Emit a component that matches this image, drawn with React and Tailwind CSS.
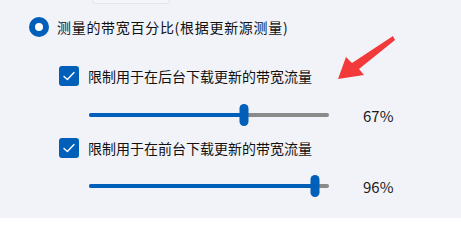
import React from 'react';

const font = { fontFamily: '"Segoe UI", "Noto Sans CJK SC", "Noto Sans", sans-serif' };

const CheckBox = () => (
    <div className="w-[20px] h-[20px] rounded-[3px] bg-[#005fb8] flex items-center justify-center shrink-0">
        <svg width="14" height="14" viewBox="0 0 14 14" fill="none">
            <path d="M2 7.4 L5.4 10.6 L12 3.6" stroke="white" strokeWidth="1.4" strokeLinecap="round" strokeLinejoin="round" />
        </svg>
    </div>
);

const Slider = ({ pos, value }) => (
    <div className="flex items-center h-[22px]">
        <div className="relative ml-[89px] w-[240px] h-[4px] rounded-full bg-[#8a8a8a]">
            <div className="h-full rounded-full bg-[#005fb8]" style={{ width: pos }} />
            <div
                className="absolute top-1/2 -translate-y-1/2 -translate-x-1/2 w-[9px] h-[22px] rounded-full bg-[#005fb8]"
                style={{ left: pos }}
            />
        </div>
        <span className="ml-[34px] mt-[3px] text-[15px] text-[#1b1b1b]">{value}</span>
    </div>
);

const App = () => {
    return (
        <div className="relative w-[461px] h-[218px] bg-[#f1f3f9] overflow-hidden" style={font}>
            <div className="ml-[92px] w-[78px] h-[4px] border-x border-b border-[#e2e5ea] rounded-b-[5px] bg-[#f4f6fa]" />

            <div className="flex items-center ml-[29px] mt-[13px] h-[20px]">
                <div className="w-[20px] h-[20px] rounded-full bg-[#005fb8] flex items-center justify-center shrink-0">
                    <div className="w-[8px] h-[8px] rounded-full bg-white" />
                </div>
                <span className="ml-[8px] text-[14px] tracking-[0.7px] text-[#111] leading-none">
                    测量的带宽百分比(根据更新源测量)
                </span>
            </div>

            <div className="flex items-center ml-[59px] mt-[29px] h-[20px]">
                <CheckBox />
                <span className="ml-[9px] text-[14px] text-[#111] leading-none">限制用于在后台下载更新的带宽流量</span>
            </div>

            <div className="mt-[18px]">
                <Slider pos="155px" value="67%" />
            </div>

            <div className="flex items-center ml-[59px] mt-[12px] h-[20px]">
                <CheckBox />
                <span className="ml-[9px] text-[14px] text-[#111] leading-none">限制用于在前台下载更新的带宽流量</span>
            </div>

            <div className="mt-[17px]">
                <Slider pos="226px" value="96%" />
            </div>

            <svg className="absolute left-0 top-0 pointer-events-none" width="461" height="218">
                <polygon
                    points="338,79 346,57 352,63 393,36 395,40 359,69 364,75"
                    fill="#f23a3a"
                />
            </svg>
        </div>
    );
};

export default App;
